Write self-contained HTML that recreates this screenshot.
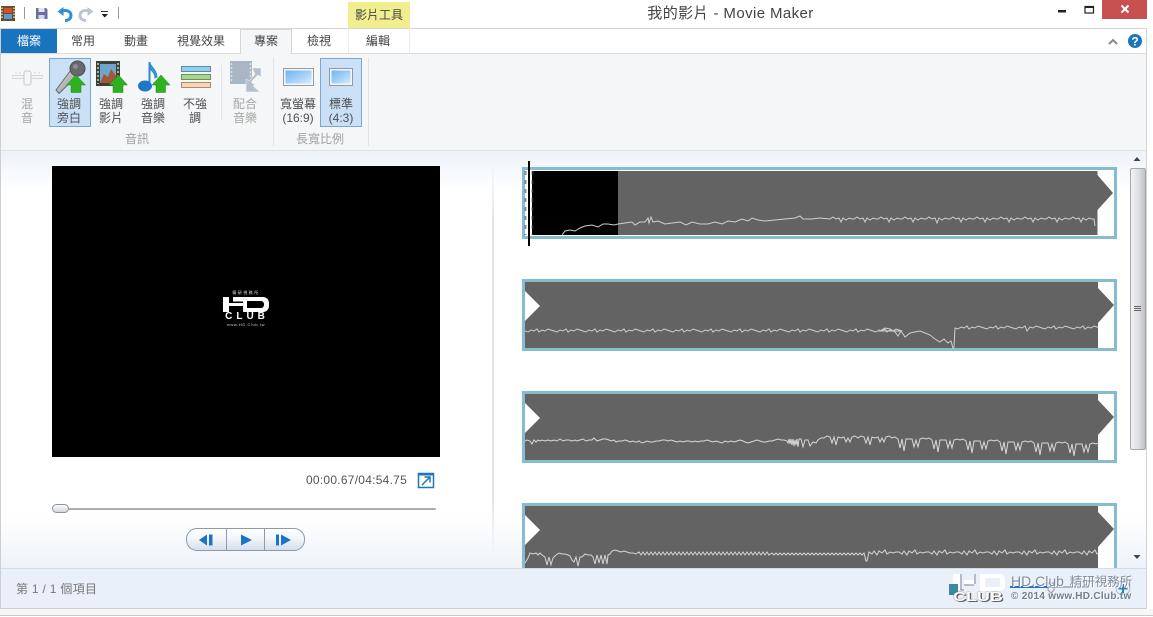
<!DOCTYPE html>
<html lang="zh-Hant"><head><meta charset="utf-8"><title>我的影片 - Movie Maker</title>
<style>
html,body{margin:0;padding:0;background:#fff}
#p{position:relative;width:1153px;height:617px;overflow:hidden;background:#fff;font-family:"Liberation Sans","Noto Sans CJK TC",sans-serif;font-size:12px;color:#444}
#p div{position:absolute}
.t{white-space:nowrap;text-align:center;transform:translateX(-50%);line-height:14px}
.tab{top:34px;color:#444;font-size:12px}
.l{color:#505050;font-size:12px}
.g{color:#a6a6a6}
.gl{top:132px;color:#a0a0a0}
svg{position:absolute;left:0;top:0;overflow:visible}
</style></head><body><div id="p">

<div style="left:0;top:0;width:1147px;height:28px;background:#fff"></div>
<div class="t" style="left:730.500px;top:5px;font-size:15px;line-height:17px;color:#444;letter-spacing:.4px">我的影片 - Movie Maker</div>
<div style="left:1102px;top:0;width:45px;height:19px;background:#c75050"></div>
<div style="left:348px;top:2px;width:62px;height:26px;background:#f0ee8e"></div>
<div class="t" style="left:379px;top:8px;color:#444">影片工具</div>

<div style="left:1px;top:28px;width:1145px;height:1px;background:#d6d6d6"></div>
<div style="left:1px;top:53px;width:1145px;height:1px;background:#dcdcdc"></div>
<div style="left:1px;top:29px;width:56px;height:24px;background:#1a73be"></div>
<div class="t tab" style="left:29px;color:#fff">檔案</div>
<div class="t tab" style="left:83px">常用</div>
<div class="t tab" style="left:136px">動畫</div>
<div class="t tab" style="left:201px">視覺效果</div>
<div style="left:240px;top:29px;width:50px;height:25px;background:#f5f6f7;border:1px solid #d6d6d6;border-bottom:0"></div>
<div class="t tab" style="left:266px">專案</div>
<div class="t tab" style="left:319px">檢視</div>
<div class="t tab" style="left:378px">編輯</div>
<div style="left:348px;top:28px;width:1px;height:25px;background:#ececec"></div>
<div style="left:409px;top:28px;width:1px;height:25px;background:#ececec"></div>

<div style="left:1px;top:54px;width:1145px;height:96px;background:#f5f6f7"></div>
<div style="left:290px;top:53px;width:856px;height:1px;background:#dcdcdc"></div>
<div style="left:1px;top:150px;width:1145px;height:1px;background:#dfe3e8"></div>

<div style="left:49px;top:58px;width:40px;height:67px;background:#c9e0f7;border:1px solid #7ba6cf"></div>
<div style="left:320px;top:58px;width:40px;height:67px;background:#c9e0f7;border:1px solid #7ba6cf"></div>

<div class="t l g" style="left:27px;top:97px">混</div><div class="t l g" style="left:27px;top:111px">音</div>
<div class="t l" style="left:69px;top:97px">強調</div><div class="t l" style="left:69px;top:111px">旁白</div>
<div class="t l" style="left:111px;top:97px">強調</div><div class="t l" style="left:111px;top:111px">影片</div>
<div class="t l" style="left:153px;top:97px">強調</div><div class="t l" style="left:153px;top:111px">音樂</div>
<div class="t l" style="left:195px;top:97px">不強</div><div class="t l" style="left:195px;top:111px">調</div>
<div class="t l g" style="left:245px;top:97px">配合</div><div class="t l g" style="left:245px;top:111px">音樂</div>
<div class="t l" style="left:298px;top:97px">寬螢幕</div><div class="t l" style="left:298px;top:111px">(16:9)</div>
<div class="t l" style="left:341px;top:97px">標準</div><div class="t l" style="left:341px;top:111px">(4:3)</div>
<div class="t gl" style="left:137px">音訊</div>
<div class="t gl" style="left:320px">長寬比例</div>
<div style="left:221px;top:65px;width:1px;height:55px;background:#e2e3e4"></div>
<div style="left:273px;top:58px;width:1px;height:88px;background:#e2e3e4"></div>
<div style="left:368px;top:58px;width:1px;height:88px;background:#e2e3e4"></div>

<div style="left:1px;top:151px;width:1145px;height:417px;background:linear-gradient(#edf2f9 0,#fff 40px,#fff 365px,#eef3fa 417px)"></div>
<div style="left:0;top:28px;width:1px;height:581px;background:#cfcfcf"></div>
<div style="left:1146px;top:28px;width:1px;height:581px;background:#d4d4d4"></div>
<div style="left:492px;top:160px;width:2px;height:400px;background:linear-gradient(rgba(226,229,234,0),#e2e5ea 15%,#e2e5ea 85%,rgba(226,229,234,0))"></div>

<div style="left:52px;top:166px;width:388px;height:291px;background:#000"></div>
<div class="t" style="left:246px;top:290px;font-size:4px;line-height:5px;color:#ddd;letter-spacing:1.5px">精研視務所</div>
<div style="left:223px;top:297px;width:6px;height:15px;background:#fff"></div>
<div style="left:229px;top:303px;width:14px;height:3px;background:#fff"></div>
<div style="left:233px;top:297px;width:36px;height:15px;background:#fff;border-radius:0 6px 6px 0;clip-path:polygon(0 0,100% 0,100% 100%,28% 100%,28% 30%,0 30%)"></div>
<div style="left:247px;top:301px;width:17px;height:7px;background:#000;border-radius:0 3px 3px 0"></div>
<div class="t" style="left:247px;top:312px;font-size:10px;line-height:9px;font-weight:bold;color:#fff;letter-spacing:4px">CLUB</div>
<div class="t" style="left:246px;top:322px;font-size:4px;line-height:5px;color:#ccc;letter-spacing:.6px">www.HD.Club.tw</div>

<div class="t" style="left:356.500px;top:473px;color:#555;font-size:12px;letter-spacing:.25px">00:00.67/04:54.75</div>
<div style="left:60px;top:508px;width:376px;height:2px;background:#a9adb8;border-radius:1px"></div>
<div style="left:52px;top:504px;width:15px;height:7px;border:1px solid #8f949e;border-radius:5px;background:linear-gradient(#fafafa,#d4d8df)"></div>
<div style="left:186px;top:528px;width:117px;height:21px;border:1px solid #8c9aab;border-radius:11px;background:linear-gradient(#fff,#f2f5f9 45%,#d5deea)"></div>
<div style="left:226px;top:529px;width:1px;height:21px;background:#8c9aab"></div>
<div style="left:264px;top:529px;width:1px;height:21px;background:#8c9aab"></div>

<svg width="1153" height="617" viewBox="0 0 1153 617">
<defs>
<linearGradient id="s" x1="0" y1="0" x2="1" y2="1"><stop offset="0" stop-color="#6eb4f4"/><stop offset=".6" stop-color="#a9d4f8"/><stop offset="1" stop-color="#d8ecfb"/></linearGradient>
<linearGradient id="m" x1="0" y1="0" x2="1" y2="1"><stop offset="0" stop-color="#e0e0e0"/><stop offset="1" stop-color="#8c8c8c"/></linearGradient>
<clipPath id="c1"><rect x="525" y="168" width="573" height="68"/></clipPath>
<clipPath id="c2"><rect x="525" y="280" width="573" height="69"/></clipPath>
<clipPath id="c3"><rect x="525" y="392" width="573" height="69"/></clipPath>
<clipPath id="c4"><rect x="525" y="504" width="573" height="64"/></clipPath>
</defs>
<!-- popout -->
<rect x="418.500" y="473.500" width="15" height="14" fill="#fff" stroke="#1c76c0" stroke-width="1.500"/><rect x="418" y="473" width="16" height="2.500" fill="#1c76c0"/>
<path d="M422 485l8-8M424.500 477h5.500v5.500" fill="none" stroke="#1c76c0" stroke-width="1.500"/>
<!-- transport -->
<path d="M199 540l8-5.500v11zM209 534.500h3.500v11H209z" fill="#1c74c9"/>
<path d="M241 534.500l11 5.500-11 5.500z" fill="#1c74c9"/>
<path d="M276 534.500h3v11h-3zM281 534.500l10 5.500-10 5.500z" fill="#1c74c9"/>

<!-- QAT -->
<rect x="1" y="6" width="14" height="15" fill="#6b4a2e"/><rect x="4" y="8" width="8" height="5" fill="#d94f2a"/><rect x="4" y="14" width="8" height="5" fill="#4f9fd0"/>
<path d="M2 7.500v12M14 7.500v12" stroke="#e8d9a8" stroke-width="1.500" stroke-dasharray="1.500 1.500"/>
<rect x="24" y="7" width="1" height="12" fill="#999"/>
<path d="M36 8h10l1.500 1.500V19H36z" fill="#6e6e9e"/><rect x="38.500" y="8" width="6" height="4" fill="#e6e6f0"/><rect x="38.500" y="15" width="6" height="4" fill="#d8d8e6"/>
<path d="M57.500 11.500l6-4.500v9z" fill="#2d8fd5"/><path d="M62 11c5-1.500 9 .5 9 4.500 0 3-2.500 5-6 5" fill="none" stroke="#2d8fd5" stroke-width="3"/>
<path d="M93.500 11.500l-6-4.500v9z" fill="#bcc5cf"/><path d="M89 11c-5-1.500-9 .5-9 4.500 0 3 2.500 5 6 5" fill="none" stroke="#bcc5cf" stroke-width="3"/>
<path d="M101 11.500h7" stroke="#333"/><path d="M101.500 14h6.500l-3.200 3.500z" fill="#222"/>
<rect x="118" y="7" width="1" height="12" fill="#999"/>
<!-- window controls -->
<rect x="1058" y="10" width="8" height="2.500" fill="#222"/>
<rect x="1085" y="6.500" width="8.500" height="6.500" fill="none" stroke="#222" stroke-width="1.200"/><rect x="1084.500" y="6" width="9.500" height="2" fill="#222"/>
<path d="M1121.500 5.500l7 7M1128.500 5.500l-7 7" stroke="#fff" stroke-width="2"/>
<path d="M1109 44l4-4 4 4" fill="none" stroke="#8a8a8a" stroke-width="2"/>
<circle cx="1135" cy="41" r="7" fill="#1c75bc"/>
<text x="1135" y="45.500" font-size="12" font-weight="bold" fill="#fff" text-anchor="middle" font-family="Liberation Sans">?</text>

<!-- Ribbon icons -->
<path d="M12 77h31" stroke="#d2d7dd" stroke-width="4"/><path d="M12.500 77h30" stroke="#f2f4f6" stroke-width="2"/><rect x="24" y="71" width="7" height="14" rx="2" fill="#f4f6f8" stroke="#c4cad2"/><path d="M16 72v1.500M20 72v1.500M35 72v1.500M39 72v1.500" stroke="#c6ccd4"/>
<path d="M56 90l15-20 6 6-18 17.500z" fill="url(#m)" stroke="#6a6a6a"/>
<circle cx="77.500" cy="68.500" r="7.500" fill="#68686c" stroke="#4a4a4a"/><circle cx="75.500" cy="66.500" r="2.500" fill="#8b8b90"/>
<path d="M76 75l9.500 10h-4.500v7.500h-10V85h-4.500z" fill="#2fb01e" stroke="#1f8a18" stroke-width=".5"/>
<rect x="96" y="61" width="24" height="25" fill="#3a4238"/><rect x="100" y="64" width="16" height="19" fill="#6ea5c9"/><path d="M100 83l4-9 4 3 3-8 5 7v7z" fill="#a2563a"/>
<path d="M98 63v21M118 63v21" stroke="#ccc" stroke-dasharray="2 2" stroke-width="1.500"/>
<path d="M118.500 75l9 10h-4.500v7.500h-10V85H109z" fill="#2fb01e" stroke="#1f8a18" stroke-width=".5"/>
<path d="M149.500 62c1 5 7 7 7.500 15l-2 1c0-5-3-7-5-9" fill="#3f96d6" stroke="#2d8bd0" stroke-width="1"/><path d="M149.500 62v24" stroke="#2d8bd0" stroke-width="2"/>
<ellipse cx="145" cy="86" rx="7" ry="5.500" fill="#1f78c6"/>
<path d="M161 75l9 10h-4.500v7.500h-9.500V85H152z" fill="#2fb01e" stroke="#1f8a18" stroke-width=".5"/>
<rect x="181.500" y="66.500" width="29" height="5" fill="#8fd0ee" stroke="#5f8aa0"/>
<rect x="181.500" y="74.500" width="29" height="5" fill="#a8d68f" stroke="#6f9060"/>
<rect x="181.500" y="82.500" width="29" height="5" fill="#fbd4b4" stroke="#a88a70"/>
<rect x="230" y="61" width="22" height="23" fill="#aab6c4"/><path d="M231.500 63v20M250.500 63v20" stroke="#dbe1e8" stroke-dasharray="2 2" stroke-width="1.500"/>
<path d="M252 68l9 0v9l-3-2-7 7 4 3-2 1 7 6h-14v-13l3 2 6-7z" fill="#b5c0cc" stroke="#f5f6f7" stroke-width=".5"/>
<rect x="283.500" y="68.500" width="30" height="17" fill="#f4f6f8" stroke="#9b9b9b"/>
<rect x="285.500" y="70.500" width="26" height="13" fill="url(#s)"/>
<rect x="329.500" y="68.500" width="23" height="17" fill="#f4f6f8" stroke="#8f9aa5"/><rect x="331.500" y="70.500" width="19" height="13" fill="url(#s)"/>

<!-- Frame 1 -->
<g>
<rect x="523.500" y="168.500" width="592" height="69" fill="#fff" stroke="#84bdd1" stroke-width="3"/>
<rect x="532" y="171" width="86" height="64" fill="#000"/>
<path d="M618 171h479.500v4l15.500 18-15.500 17V235H618z" fill="#636363"/>
<path clip-path="url(#c1)" d="M562 235L565 231 570 230 575 231 580 228 585 226 592 225 598 227 603 224 608 224 614 225 618 224 625 223 632 222 635 225 640 222 645 222 648 218 649 223 651 217 653 222 658 221 665 224 672 223 680 222 686 225 692 222 700 224 708 224 715 222 722 224 728 221 735 222 742 219 748 221 752 218 758 220 765 221 775 220 785 219 795 218 800 216 803 219 812 219 820 218 830 219l3-2 3 2 3-1 2 4 2-4 3 2 3-2 3 1 2 0 3-2 3 2 3-1 2 4 2-4 3 2 3-2 3 1 2 0 3-2 3 2 3-1 2 4 2-4 3 2 3-2 3 1 2 0 3-2 3 2 3-1 2 4 2-4 3 2 3-2 3 1 2 0 3-2 3 2 3-1 2 5 2-5 3 2 3-2 3 1 2 0 3-2 3 2 3-1 2 4 2-4 3 2 3-2 3 1 2 0 3-2 3 2 3-1 2 4 2-4 3 2 3-2 3 1 2 0 3-2 3 2 3-1 2 4 2-4 3 2 3-2 3 1 2 0 3-2 3 2 3-1 2 4 2-4 3 2 3-2 3 1 2 0 3-2 3 2 3-1 2 4 2-4 3 2 3-2 3 1 2 0 3-2 3 2 3-1 2 4 2-4 3 2 3-2 3 1 2 0 1 7" fill="none" stroke="#cfcfcf" stroke-width="1"/>
<path d="M525.500 171v64M532.500 171v64" stroke="#444" stroke-dasharray="4 5" stroke-width="2" opacity=".6"/>
<rect x="528" y="161" width="2" height="85" fill="#000"/>
</g>

<!-- Frame 2 -->
<rect x="523.500" y="280.500" width="592" height="69" fill="#fff" stroke="#84bdd1" stroke-width="3"/>
<path d="M525 282h573v6l16 17-16 18v25H525v-27l15-15-15-15z" fill="#636363"/>
<path clip-path="url(#c2)" d="M525 331l3 1 3-2 3 1 3-2 2 3 3-2 3 1 3-2 3 1 3 1 3 1 3-2 3 1 3-2 2 3 3-2 3 1 3-2 3 1 3 1 3 1 3-2 3 1 3-2 2 3 3-2 3 1 3-2 3 1 3 1 3 1 3-2 3 1 3-2 2 3 3-2 3 1 3-2 3 1 3 1 3 1 3-2 3 1 3-2 2 3 3-2 3 1 3-2 3 1 3 1 3 1 3-2 3 1 3-2 2 3 3-2 3 1 3-2 3 1 3 1 3 1 3-2 3 1 3-2 2 3 3-2 3 1 3-2 3 1 3 1 3 1 3-2 3 1 3-2 2 3 3-2 3 1 3-2 3 1 3 1 3 1 3-2 3 1 3-2 2 3 3-2 3 1 3-2 3 1 3 1 3 1 3-2 3 1 3-2 2 3 3-2 3 1 3-2 3 1 3 1 3 1 3-2 3 1 3-2 2 3 3-2 3 1 3-2 3 1 3 1 3 1 3-2 3 1 3-2 2 3 3-2 3 1 3-2 3 1 3 1 3 1 3-2 3 1 3-2 2 3 3-2 3 1 3-2 3 1 3 1L880 331 885 328 890 329 895 332 898 336 901 331 905 337 910 333 915 332 920 331 925 333 930 335 935 339 940 342 944 339 948 343 951 341 953 348 954 347 955 328l3 1 3-2 3 1 3-2 2 3 3-2 3 1 3-2 3 1 3 1 3 1 3-2 3 1 3-2 2 3 3-2 3 1 3-2 3 1 3 1 3 1 3-2 3 1 3-2 2 5 3-4 3 1 3-2 3 1 3 1 3 1 3-2 3 1 3-2 2 3 3-2 3 1 3-2 3 1 3 1 3 1 3-2 3 1 3-2 2 3 3-2 3 1 3-2 3 1 3 1" fill="none" stroke="#cfcfcf"/>

<!-- Frame 3 -->
<rect x="523.500" y="392.500" width="592" height="69" fill="#fff" stroke="#84bdd1" stroke-width="3"/>
<path d="M525 394h573v6l16 17-16 18v25H525v-27l15-15-15-15z" fill="#636363"/>
<path clip-path="url(#c3)" d="M525 441l2-1 3 1 2 3 2-4 2 2 2-2 2 1 2-1 3 1 3-1 3 1 3-1 3 1 3-2 3 2 3-1 3 0 3 1 3-1 2 1 3-1 3-1 3 2 3-1 3 0 2-2 3 3 3-1 3-1 3 0 3 1 2 1 3-1 2 2 3-1 3 0 3-1 3 1 2 1 3-1 2 1 2 0 2-1 3 2 3-1 2-1 3 1 3 0 3-1 3 0 3-1 3 0 3 1 3-1 3 1 3 1 3-1 3 1 3-1 3 0 3 1 3-1 3 1 3-1 3 0 3-1 3 1 3 1 3-1 3 1 3 1 3-2 3 1 3-1 3 1 3-1 3-1 3 1 2 1 3 1 3-1 3-1 3-1 3 1 3 1 3 0 3-1 3 0 3-1 3-1 3 1 3 0 3 1 1 2 1-4 1 5 1-5 1 6 1-6 1 7 1-6 1 5 1-6 1 8 1-8 2 0 2 8 2-7 3 0 2 6 3-4 3 1 2-3 3-2 3 0 3-2 3 1 2 6 2-6 2 8 2-8 3 1 3-1 2 5 2-4 2 4 2-5 3-1 3 2 3-2 3 1 2 6 2-6 2 8 2-8 3 1 3-1 2 5 2-4 2 4 2-5 3-1 3 2 3-1 3 2 2 9 2-9 2 12 2-12 3 0 3 0 2 8 2-7 2 7 2-8 3-1 3 1 3-1 3 2 2 9 2-9 2 12 2-12 3 0 3 0 2 8 2-7 2 7 2-8 3-1 3 1 3-1 3 2 2 9 2-9 2 12 2-12 3 0 3 0 2 8 2-7 2 7 2-8 3-1 3 1 3-1 3 2 2 9 2-9 2 12 2-12 3 0 3 0 2 8 2-7 2 7 2-8 3-1 3 1 3-1 3 2 2 9 2-9 2 12 2-12 3 0 3 0 2 8 2-7 2 7 2-8 3-1 3 1 3-1 3 2 2 9 2-9 2 12 2-12 3 0 3 0 2 8 2-7 2 7 2-8 3-1 3 1 3-1 3 2 2 9 2-9 2 12 2-12 3 0 3 0 2 8 2-7 2 7 2-8 3-1 3 1" fill="none" stroke="#d8d8d8"/>

<!-- Frame 4 -->
<rect x="523.500" y="504.500" width="592" height="69" fill="#fff" stroke="#84bdd1" stroke-width="3"/>
<path d="M525 506h573v6l16 17-16 18v25H525v-27l15-15-15-15z" fill="#636363"/>
<path clip-path="url(#c4)" d="M525 563l3-5 2-5 3 1 3-1 2 2 2-2 2 2 3 2 2 8 2-8 2 8 2-7 3-3 3-2 3 1 3 0 3 1 2 1 2 4 2 2 2-5 2 9 2-9 2 0 3-3 3 1 3 0 2 2 2 7 2-9 2 8 2-8 2 9 2-9 2 9 1-9 2-1 2-3 3-1 3 1 3 1 3-1 3 1 3 1 3 0 3 1 3-2 2 3 2-3 2 3 2-3 2 3 2-3 2 3 2-3 2 3 2-3 2 3 2-3 2 3 2-3 2 3 2-3 2 3 2-3 2 3 2-3 2 3 2-3 2 3 2-3 2 3 2-3 2 3 2-3 2 3 2-3 2 3 2-3 2 3 2-3 2 3 2-3 2 3 2-3 2 3 2-3 2 3 2-3 2 3 2-3 2 3 2-3 2 3 2-3 2 3 2-3 2 3 2-3 2 3 2-3 2 3 2-3 2 3 2-3 2 3 2-3 2 3 2-3 2 3 2-3 2 3 3-2 2 2 2-2 2 2 2-2 2 2 2-2 2 2 2-2 2 2 2-2 2 2 2-2 2 2 2-2 2 2 2-2 2 2 2-2 2 2 2-2 2 2 2-2 2 2 2-2 2 2 2-2 2 2 2-2 2 2 2-2 2 2 2-2 2 2 2-2 2 2 2-2 2 2 2-2 2 2 2-2 2 2 2-2 2 2 2-2 2 2 2-2 2 8 1 0 2-9 3 2 2-3 3 4 2-4 3 2 3-3 2 4 3-2 3 1 3-1 3 0 3 2 2-3 3 4 2-4 3 2 3-3 2 4 3-2 3 1 3-1 3 0 3 2 2-3 3 4 2-4 3 2 3-3 2 4 3-2 3 1 3-1 3 0 3 2 2-3 3 4 2-4 3 2 3-3 2 4 3-2 3 1 3-1 3 0 3 2 2-3 3 4 2-4 3 2 3-3 2 4 3-2 3 1 3-1 3 0 3 2 2-3 3 4 2-4 3 2 3-3 2 4 3-2 3 1 3-1 3 0 3 2 2-3 3 4 2-4 3 2 3-3 2 4 3-2 3 1 3-1 3 0 3 2 2-3 3 4 2-4 3 2 3-3 2 4 3-2 3 1 3-1 3 0" fill="none" stroke="#d5d5d5"/>

<!-- scrollbar -->
<path d="M1133.500 161l3.500-4 3.500 4z" fill="#444"/>
<path d="M1133.500 555l3.500 4 3.500-4z" fill="#444"/>
</svg>

<div style="left:1130px;top:168px;width:14px;height:280px;border:1px solid #a6a6a6;border-radius:2px;background:linear-gradient(90deg,#f4f4f6,#dcdde2 55%,#bfc1c8)"></div>
<div style="left:1134px;top:306px;width:7px;height:1px;background:#666;box-shadow:0 2px 0 #666,0 4px 0 #666"></div>

<div style="left:1px;top:568px;width:1145px;height:40px;background:#e9f0f9;border-top:1px solid #d5dbe3;box-sizing:border-box"></div>
<div style="left:0;top:608px;width:1147px;height:1px;background:#cfcfcf"></div>
<div style="left:0;top:609px;width:1153px;height:6px;background:#f7f7f7"></div>
<div style="left:0;top:615px;width:1153px;height:1px;background:#c9c9c9"></div>
<div style="left:16px;top:582px;color:#777;line-height:15px;letter-spacing:.3px">第 1 / 1 個項目</div>

<!-- Watermark -->
<svg width="1153" height="617" viewBox="0 0 1153 617">
<path d="M953 574h7v16h-7zM964 580h10v5h-10zM980 574h20a5 5 0 0 1 5 5v7a5 5 0 0 1-5 5h-20z" fill="#fff"/>
<path d="M961 584h9v2h-9zM985 578h15v9h-15z" fill="#e9f0f9"/>
<path d="M961 574v16h3M964 585h10M975 574v10" stroke="#7a8695" fill="none"/>
<rect x="949" y="584" width="9" height="11" fill="#3a8aa0"/>
<path d="M1010 587h38" stroke="#2d6fc0" stroke-width="2"/><path d="M1048 587h42" stroke="#71808f"/>
<path d="M1048 583h6v7l-3 3-3-3z" fill="none" stroke="#8a99a9"/>
<path d="M1123 584v9M1118.500 588.500h9" stroke="#2a7cc5" stroke-width="2"/>
<circle cx="1123" cy="588" r="7" fill="none" stroke="#aab4c0"/>
</svg>
<div style="left:953px;top:591px;font-size:13px;line-height:11px;font-weight:bold;color:#fff;text-shadow:0 0 1px #444,1px 1px 0 #667;transform:scaleX(1.38);transform-origin:0 0">CLUB</div>
<div style="left:1011px;top:573px;font-size:14px;line-height:17px;color:#7f8c9c;text-shadow:1px 1px 0 #fff;white-space:nowrap">HD.Club <span style="font-size:12.500px;margin-left:2px">精研視務所</span></div>
<div style="left:1011px;top:591px;font-size:10px;line-height:12px;font-weight:bold;color:#727e8c;text-shadow:1px 1px 0 #fff;white-space:nowrap;letter-spacing:.3px">© 2014 www.HD.Club.tw</div>

</div></body></html>
